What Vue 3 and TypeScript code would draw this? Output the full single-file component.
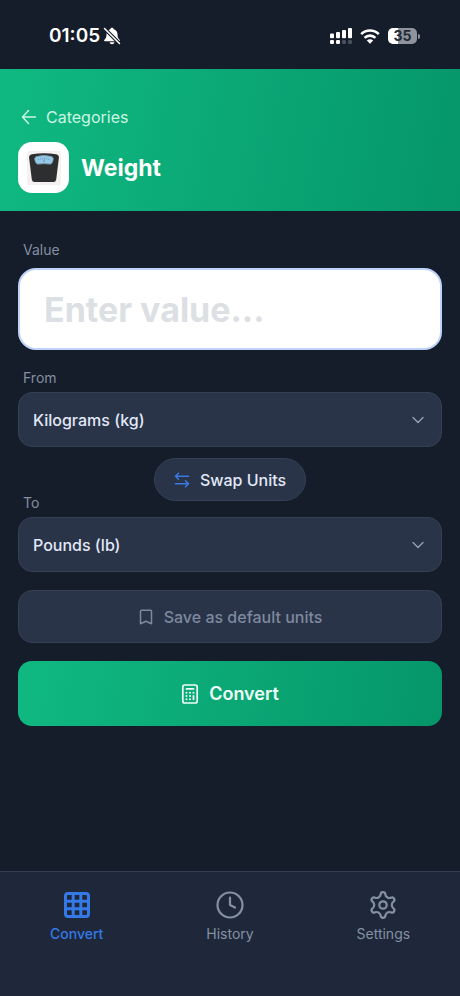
<script setup lang="ts">
import { ref } from 'vue'

interface Unit {
  id: string
  label: string
}

type Point = [number, number]

const units: Unit[] = [
  { id: 'kg', label: 'Kilograms (kg)' },
  { id: 'g', label: 'Grams (g)' },
  { id: 'lb', label: 'Pounds (lb)' },
  { id: 'oz', label: 'Ounces (oz)' },
]

const tabs = ['Convert', 'History', 'Settings'] as const
type Tab = (typeof tabs)[number]

const amount = ref('')
const fromUnit = ref('kg')
const toUnit = ref('lb')
const activeTab = ref<Tab>('Convert')

function swapUnits(): void {
  const previous = fromUnit.value
  fromUnit.value = toUnit.value
  toUnit.value = previous
}

// One gear tooth as four cubic segments, repeated every 60 degrees around (15, 15).
const tooth: Point[] = [
  [-3.2, -8.4], [-2.5, -9.1], [-2.4, -10.4],
  [-2.3, -12], [-1.5, -12.8], [0, -12.8],
  [1.5, -12.8], [2.3, -12], [2.4, -10.4],
  [2.5, -9.1], [3.2, -8.4], [4.4, -7.6],
]

function gearPath(): string {
  let d = 'M10.6 7.4'
  for (let i = 0; i < 6; i++) {
    const a = (i * Math.PI) / 3
    const turned = tooth.map(([x, y]) => {
      const px = 15 + x * Math.cos(a) - y * Math.sin(a)
      const py = 15 + x * Math.sin(a) + y * Math.cos(a)
      return `${px.toFixed(2)} ${py.toFixed(2)}`
    })
    d += ' C' + turned.join(' ')
  }
  return d + 'Z'
}

const gear = gearPath()
</script>

<template>
  <div class="app">
    <div class="status">
      <div class="status-left">
        <span class="clock">01:05</span>
        <svg class="bell" viewBox="0 0 18 18" aria-hidden="true">
          <path d="M9 .8c-1 0-1.600.6-1.700 1.400C4.800 2.900 3.500 4.900 3.500 7.500c0 3-.9 4.200-2.100 5.300-.6.600-.3 1.500.6 1.500h14c.9 0 1.200-.9.6-1.500-1.200-1.100-2.100-2.300-2.100-5.300 0-2.600-1.300-4.600-3.800-5.300C10.600 1.400 10 .8 9 .8z" fill="#fff" />
          <path d="M6.600 15.200h4.800c-.2 1.200-1.200 2-2.400 2s-2.200-.8-2.400-2z" fill="#fff" />
          <path d="M1.500 1.500l15 15" stroke="#151c2a" stroke-width="3.800" />
          <path d="M1.500 1.500l15 15" stroke="#fff" stroke-width="1.500" stroke-linecap="round" />
        </svg>
      </div>
      <div class="status-right">
        <svg class="signal" viewBox="0 0 22 16" aria-hidden="true">
          <g fill="#fff">
            <rect x="0" y="5.500" width="4" height="4.800" rx="1" />
            <rect x="6" y="4" width="4" height="6.300" rx="1" />
            <rect x="12" y="2" width="4" height="8.300" rx="1" />
            <rect x="18" y="0" width="4" height="10.300" rx="1" />
            <rect x="0" y="12" width="4" height="4" rx="1.200" />
            <rect x="6" y="12" width="4" height="4" rx="1.200" />
          </g>
          <g fill="#494f5b">
            <rect x="12" y="12" width="4" height="4" rx="1.200" />
            <rect x="18" y="12" width="4" height="4" rx="1.200" />
          </g>
        </svg>
        <svg class="wifi" viewBox="0 0 20 15" fill="none" stroke="#fff" stroke-width="2.700" aria-hidden="true">
          <path d="M1.200 5.100a12.600 12.600 0 0 1 17.600 0" />
          <path d="M4.600 8.900a7.700 7.700 0 0 1 10.800 0" />
          <path d="M10 14.800l-3.200-3.300a4.600 4.600 0 0 1 6.400 0z" fill="#fff" stroke="none" />
        </svg>
        <div class="battery">
          <span class="battery-body">35</span>
          <span class="battery-tip"></span>
        </div>
      </div>
    </div>

    <header class="header">
      <a class="back" href="#categories">
        <svg viewBox="0 0 16 16" fill="none" stroke="currentColor" stroke-width="1.500" stroke-linecap="round" stroke-linejoin="round" aria-hidden="true">
          <path d="M14.500 8H1.500M7.500 1.500L1.500 8l6 6.500" />
        </svg>
        Categories
      </a>
      <div class="title-row">
        <div class="tile">
          <svg viewBox="0 0 36 36" aria-hidden="true">
            <rect x="1" y="1" width="34" height="34" rx="2" fill="#f4f1f0" />
            <path d="M6 4.200Q18 2.200 30 4.200Q33.200 4.900 32.900 7.800L30.200 29.500Q29.800 32 27.300 32H8.700Q6.200 32 5.800 29.500L3.100 7.800Q2.800 4.900 6 4.200z" fill="#2d2e30" />
            <path d="M10.500 6.600Q18 4.400 25.500 6.600Q27.800 7.400 27.200 9.600L26.200 12.600Q25.500 14.400 23.400 14Q18 13.200 12.600 14Q10.500 14.400 9.800 12.600L8.800 9.600Q8.200 7.400 10.500 6.600z" fill="#93c9e8" stroke="#7d9dac" stroke-width="1" />
            <path d="M12 9.600Q18 7.600 24 9.600" stroke="#5f8ba5" stroke-width=".9" stroke-dasharray="1 1" fill="none" />
            <path d="M18 9.500v2.500" stroke="#5f8ba5" stroke-width=".9" />
          </svg>
        </div>
        <h1>Weight</h1>
      </div>
    </header>

    <main class="content">
      <label class="label label-value" for="amount">Value</label>
      <input id="amount" v-model="amount" class="amount" type="text" inputmode="decimal" placeholder="Enter value..." />

      <label class="label" for="from">From</label>
      <div class="select-box">
        <select id="from" v-model="fromUnit">
          <option v-for="unit in units" :key="unit.id" :value="unit.id">{{ unit.label }}</option>
        </select>
        <svg class="chevron" viewBox="0 0 12 8" aria-hidden="true"><path d="M1 1.500l5 5 5-5" /></svg>
      </div>

      <button class="swap" type="button" @click="swapUnits">
        <svg viewBox="0 0 16 16" fill="none" stroke="currentColor" stroke-width="1.500" stroke-linecap="round" stroke-linejoin="round" aria-hidden="true">
          <path d="M14.500 4.200H1.500M4.500 1.200l-3 3 3 3M1.500 11.800h13M11.500 8.800l3 3-3 3" />
        </svg>
        Swap Units
      </button>

      <label class="label label-to" for="to">To</label>
      <div class="select-box">
        <select id="to" v-model="toUnit">
          <option v-for="unit in units" :key="unit.id" :value="unit.id">{{ unit.label }}</option>
        </select>
        <svg class="chevron" viewBox="0 0 12 8" aria-hidden="true"><path d="M1 1.500l5 5 5-5" /></svg>
      </div>

      <button class="save" type="button">
        <svg viewBox="0 0 16 16" fill="none" stroke="currentColor" stroke-width="1.500" stroke-linejoin="round" aria-hidden="true">
          <path d="M3.500 1.200h9a1 1 0 0 1 1 1v12.600L8 12.200l-5.500 2.600V2.200a1 1 0 0 1 1-1z" />
        </svg>
        Save as default units
      </button>

      <button class="convert" type="button">
        <svg viewBox="0 0 18 20" fill="none" aria-hidden="true">
          <rect x="1.800" y="1" width="14.400" height="18" rx="2" stroke="currentColor" stroke-width="1.700" />
          <path d="M5.500 4.900h7" stroke="currentColor" stroke-width="1.800" stroke-linecap="round" />
          <g fill="currentColor">
            <circle cx="5.500" cy="8.700" r="1" /><circle cx="9" cy="8.700" r="1" /><circle cx="12.500" cy="8.700" r="1" />
            <circle cx="5.500" cy="12" r="1" /><circle cx="9" cy="12" r="1" />
            <circle cx="5.500" cy="15.300" r="1" /><circle cx="9" cy="15.300" r="1" />
          </g>
          <path d="M12.500 12v3.300" stroke="currentColor" stroke-width="1.800" stroke-linecap="round" />
        </svg>
        Convert
      </button>
    </main>

    <nav class="nav">
      <button v-for="tab in tabs" :key="tab" type="button" class="tab" :class="{ active: tab === activeTab }" @click="activeTab = tab">
        <svg v-if="tab === 'Convert'" viewBox="0 0 30 30" fill="none" stroke="currentColor" stroke-width="3" aria-hidden="true">
          <rect x="3.500" y="3.500" width="23" height="23" rx="2.500" />
          <path d="M11.200 3v24M18.800 3v24M3 11.200h24M3 18.800h24" />
        </svg>
        <svg v-else-if="tab === 'History'" viewBox="0 0 30 30" fill="none" stroke="currentColor" stroke-width="2.200" stroke-linecap="round" stroke-linejoin="round" aria-hidden="true">
          <circle cx="15" cy="15" r="12.500" />
          <path d="M15 7.500V15l5 2.500" />
        </svg>
        <svg v-else viewBox="0 0 30 30" fill="none" stroke="currentColor" stroke-width="2.200" stroke-linejoin="round" aria-hidden="true">
          <path :d="gear" />
          <circle cx="15" cy="15" r="3.700" />
        </svg>
        <span>{{ tab }}</span>
      </button>
    </nav>
  </div>
</template>

<style>
body {
  margin: 0;
  background: #151c2a;
}
</style>

<style scoped>
.app,
.app * {
  box-sizing: border-box;
}

.app {
  display: flex;
  flex-direction: column;
  min-height: 100vh;
  background: #151c2a;
  color: #e2e8f8;
  font-family: Inter, "Liberation Sans", sans-serif;
}

button,
select,
input {
  font-family: inherit;
  margin: 0;
}

button {
  cursor: pointer;
}

.status {
  display: flex;
  align-items: center;
  justify-content: space-between;
  padding: 24px 40px 21px 49px;
}

.status-left,
.status-right {
  display: flex;
  align-items: center;
}

.status-left {
  gap: 3px;
}

.status-right {
  gap: 8px;
}

.clock {
  color: #fff;
  font-size: 19px;
  font-weight: 600;
  line-height: 24px;
}

.bell {
  width: 18px;
  height: 18px;
}

.signal {
  width: 22px;
  height: 16px;
}

.wifi {
  width: 20px;
  height: 15px;
}

.battery {
  display: flex;
  align-items: center;
  gap: 1px;
}

.battery-body {
  width: 29px;
  height: 16px;
  border-radius: 5px;
  background: linear-gradient(90deg, #fff 36%, #8f939b 36%);
  color: #232a37;
  font-size: 14px;
  font-weight: 700;
  line-height: 16px;
  text-align: center;
}

.battery-tip {
  width: 2px;
  height: 5px;
  border-radius: 0 2px 2px 0;
  background: #8f939b;
}

.header {
  display: flex;
  flex-direction: column;
  align-items: flex-start;
  gap: 13px;
  padding: 36px 18px 18px;
  background: linear-gradient(100deg, #10b981, #059669);
}

.back {
  display: flex;
  align-items: center;
  gap: 9px;
  padding-left: 3px;
  color: #cbf6e3;
  font-size: 16px;
  line-height: 24px;
  text-decoration: none;
}

.back svg {
  width: 16px;
  height: 16px;
}

.title-row {
  display: flex;
  align-items: center;
  gap: 12px;
}

.tile {
  display: grid;
  place-items: center;
  width: 51px;
  height: 51px;
  border-radius: 14px;
  background: #fff;
}

.tile svg {
  width: 36px;
  height: 36px;
}

h1 {
  margin: 0;
  color: #fff;
  font-size: 23px;
  font-weight: 700;
  line-height: 32px;
}

.content {
  display: flex;
  flex: 1;
  flex-direction: column;
  padding: 29px 18px 24px;
}

.label {
  align-self: flex-start;
  margin: 18px 0 4px 5px;
  color: #848fa1;
  font-size: 14px;
  line-height: 20px;
}

.label-value {
  margin-top: 0;
  margin-bottom: 8px;
}

.label-to {
  margin-top: -8px;
}

.amount {
  width: 100%;
  height: 82px;
  padding: 0 24px;
  border: 2px solid #bfd3fa;
  border-radius: 18px;
  outline: none;
  background: #fff;
  color: #1e293b;
  font-size: 34px;
  font-weight: 700;
}

.amount::placeholder {
  color: #dcdfe3;
  opacity: 1;
}

.select-box {
  display: grid;
  align-items: center;
}

.select-box select {
  grid-area: 1 / 1;
  width: 100%;
  height: 55px;
  padding: 0 44px 0 14px;
  border: 1px solid #344054;
  border-radius: 14px;
  appearance: none;
  background: #293448;
  color: #e2e8f8;
  font-size: 16px;
  font-weight: 500;
}

.chevron {
  grid-area: 1 / 1;
  justify-self: end;
  width: 12px;
  height: 8px;
  margin-right: 18px;
  fill: none;
  stroke: #94a0b4;
  stroke-width: 1.4;
  stroke-linecap: round;
  stroke-linejoin: round;
  pointer-events: none;
}

.swap {
  display: flex;
  align-items: center;
  align-self: center;
  gap: 10px;
  height: 43px;
  margin-top: 11px;
  padding: 0 19px;
  border: 1px solid #344054;
  border-radius: 22px;
  background: #293448;
  color: #e2e8f8;
  font-size: 16px;
  font-weight: 500;
}

.swap svg {
  width: 16px;
  height: 16px;
  color: #3b7be8;
}

.save,
.convert {
  display: flex;
  align-items: center;
  justify-content: center;
  width: 100%;
  margin-top: 18px;
  border-radius: 14px;
}

.save {
  gap: 10px;
  height: 53px;
  border: 1px solid #344054;
  background: #293448;
  color: #7d899e;
  font-size: 16px;
  font-weight: 500;
}

.save svg {
  width: 16px;
  height: 16px;
}

.convert {
  gap: 10px;
  height: 65px;
  border: 0;
  background: linear-gradient(100deg, #10b981, #059669);
  color: #effff8;
  font-size: 18px;
  font-weight: 600;
}

.convert svg {
  width: 18px;
  height: 20px;
}

.nav {
  display: grid;
  grid-template-columns: repeat(3, 1fr);
  padding: 18px 0 52px;
  border-top: 1px solid #333e50;
  background: #1e283a;
}

.tab {
  display: flex;
  flex-direction: column;
  align-items: center;
  gap: 4px;
  padding: 0;
  border: 0;
  background: none;
  color: #8490a3;
  font-size: 14px;
  font-weight: 400;
  line-height: 20px;
}

.tab.active {
  color: #3479e5;
  font-weight: 500;
}

.tab svg {
  width: 30px;
  height: 30px;
}
</style>
